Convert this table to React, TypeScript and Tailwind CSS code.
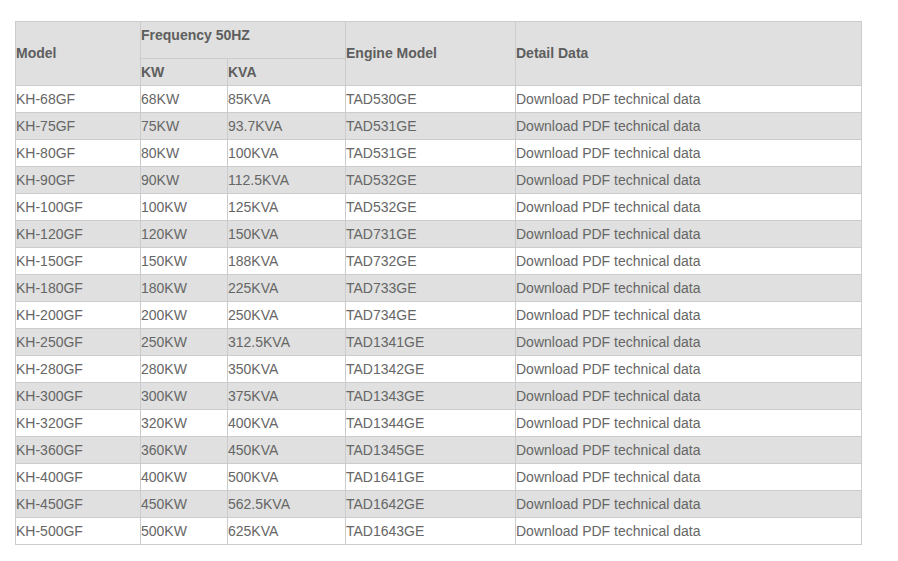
import React from "react";

const rows: [string, string, string, string][] = [
  ["KH-68GF", "68KW", "85KVA", "TAD530GE"],
  ["KH-75GF", "75KW", "93.7KVA", "TAD531GE"],
  ["KH-80GF", "80KW", "100KVA", "TAD531GE"],
  ["KH-90GF", "90KW", "112.5KVA", "TAD532GE"],
  ["KH-100GF", "100KW", "125KVA", "TAD532GE"],
  ["KH-120GF", "120KW", "150KVA", "TAD731GE"],
  ["KH-150GF", "150KW", "188KVA", "TAD732GE"],
  ["KH-180GF", "180KW", "225KVA", "TAD733GE"],
  ["KH-200GF", "200KW", "250KVA", "TAD734GE"],
  ["KH-250GF", "250KW", "312.5KVA", "TAD1341GE"],
  ["KH-280GF", "280KW", "350KVA", "TAD1342GE"],
  ["KH-300GF", "300KW", "375KVA", "TAD1343GE"],
  ["KH-320GF", "320KW", "400KVA", "TAD1344GE"],
  ["KH-360GF", "360KW", "450KVA", "TAD1345GE"],
  ["KH-400GF", "400KW", "500KVA", "TAD1641GE"],
  ["KH-450GF", "450KW", "562.5KVA", "TAD1642GE"],
  ["KH-500GF", "500KW", "625KVA", "TAD1643GE"],
];

export default function App() {
  const th = "border border-[#cccccc] text-left font-bold text-[#5e5e5e] p-0 align-middle";
  const td = "border border-[#cccccc] text-left text-[#666666] p-0 align-middle";
  return (
    <div className="bg-white w-[898px] h-[561px] pt-[21px] pl-[15px]" style={{ fontFamily: '"Liberation Sans", Arial, sans-serif' }}>
      <table className="border-collapse table-fixed w-[846px] text-[14px] leading-[16px]">
        <colgroup>
          <col className="w-[125px]" />
          <col className="w-[87px]" />
          <col className="w-[118px]" />
          <col className="w-[170px]" />
          <col className="w-[346px]" />
        </colgroup>
        <thead>
          <tr className="bg-[#dfe0df] h-[37px]">
            <th rowSpan={2} className={th + " pb-[2px]"}>Model</th>
            <th colSpan={2} className={th + " pb-[10px]"}>Frequency 50HZ</th>
            <th rowSpan={2} className={th + " pb-[2px]"}>Engine Model</th>
            <th rowSpan={2} className={th + " pb-[2px]"}>Detail Data</th>
          </tr>
          <tr className="bg-[#dfe0df] h-[27px]">
            <th className={th}>KW</th>
            <th className={th}>KVA</th>
          </tr>
        </thead>
        <tbody>
          {rows.map((r, i) => (
            <tr key={r[0]} className={(i % 2 === 1 ? "bg-[#dfe0df]" : "bg-white") + " h-[27px]"}>
              <td className={td}>{r[0]}</td>
              <td className={td}>{r[1]}</td>
              <td className={td}>{r[2]}</td>
              <td className={td}>{r[3]}</td>
              <td className={td}>Download PDF technical data</td>
            </tr>
          ))}
        </tbody>
      </table>
    </div>
  );
}
